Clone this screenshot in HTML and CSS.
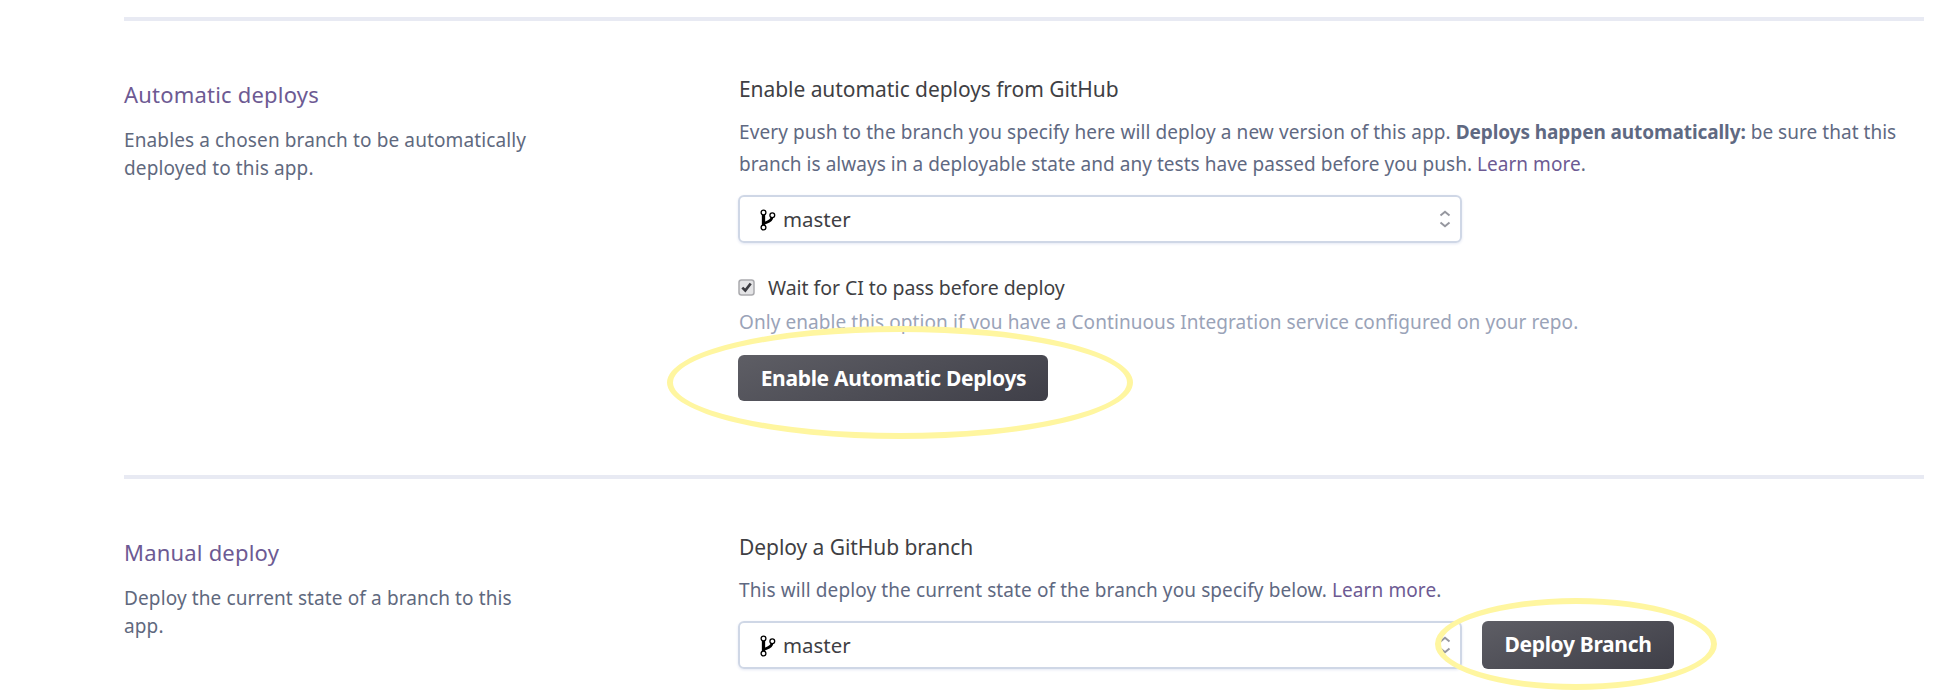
FILE: index.html
```
<!DOCTYPE html>
<html lang="en">
<head>
<meta charset="utf-8">
<title>Deploy settings</title>
<link rel="stylesheet" href="styles.css">
</head>
<body>
<svg class="defs" width="0" height="0" aria-hidden="true">
  <symbol id="branch" viewBox="0 0 16 24">
    <path d="M3.500 7v12" fill="none" stroke="#000" stroke-width="3.300"/>
    <path d="M12 10c-.2 4.600-4.500 4.800-8 6.300" fill="none" stroke="#000" stroke-width="2.800"/>
    <g fill="#fff" stroke="#000" stroke-width="1.300"><circle cx="3.500" cy="5.500" r="2.400"/><circle cx="12.300" cy="8.300" r="2.400"/><circle cx="3.500" cy="20.500" r="2.400"/></g>
  </symbol>
  <symbol id="sort" viewBox="0 0 12 18">
    <path d="M1.500 5.500 6 1.800l4.500 3.700M1.500 12.500 6 16.200l4.500-3.700" fill="none" stroke="#96979f" stroke-width="2"/>
  </symbol>
</svg>
<main class="page">
  <section class="section">
    <div class="intro">
      <h2 class="title">Automatic deploys</h2>
      <p class="desc">Enables a chosen branch to be automatically<br>deployed to this app.</p>
    </div>
    <div class="content">
      <h3 class="subtitle">Enable automatic deploys from GitHub</h3>
      <p class="text"><span class="lead">Every push to the branch you specify here will deploy a new version of this app. </span><b class="strong">Deploys happen automatically:</b> be sure that this<br>branch is always in a deployable state and any tests have passed before you push. <a class="link">Learn more</a>.</p>
      <div class="select"><svg class="branch"><use href="#branch"/></svg><span class="value">master</span><svg class="sort"><use href="#sort"/></svg></div>
      <label class="check"><svg class="box" viewBox="0 0 17 17"><rect x="1" y="1" width="15" height="15" rx="2.500" fill="#e4e4e6" stroke="#aaaaae" stroke-width="1.500"/><path d="M4.300 8.600 7.300 11.500 12.700 4.500" fill="none" stroke="#3c3c42" stroke-width="2.700"/></svg><span>Wait for CI to pass before deploy</span></label>
      <p class="hint">Only enable this option if you have a Continuous Integration service configured on your repo.</p>
      <div class="action"><button class="button enable">Enable Automatic Deploys</button><i class="ring ring-enable"></i></div>
    </div>
  </section>
  <section class="section section-manual">
    <div class="intro">
      <h2 class="title">Manual deploy</h2>
      <p class="desc">Deploy the current state of a branch to this<br>app.</p>
    </div>
    <div class="content">
      <h3 class="subtitle">Deploy a GitHub branch</h3>
      <p class="text text-manual">This will deploy the current state of the branch you specify below. <a class="link">Learn more</a>.</p>
      <div class="row"><div class="select"><svg class="branch"><use href="#branch"/></svg><span class="value">master</span><svg class="sort"><use href="#sort"/></svg></div>
      <div class="action"><button class="button deploy">Deploy Branch</button><i class="ring ring-deploy"></i></div></div>
    </div>
  </section>
</main>
</body>
</html>
```
FILE: styles.css
```
* { box-sizing: border-box; }
body { margin: 0; background: #fff; font-family: "Noto Sans", sans-serif; color: #3f3f44; }
.defs { display: block; }
.page { padding: 17px 12px 0 124px; }
.section { display: flex; height: 458px; border-top: 4px solid #e8eaf3; white-space: nowrap; }
.section-manual { height: 220px; }
.intro { width: 614px; padding-top: 57px; }
.content { flex: 1; padding-top: 52px; }
h2, h3, p { margin: 0; font-weight: 400; }
.title { font-size: 22px; line-height: 32px; letter-spacing: .2px; color: #6d5a93; }
.desc { margin-top: 16px; font-size: 19px; line-height: 28px; letter-spacing: .12px; color: #5f697e; }
.subtitle { padding-left: 1px; font-size: 21px; line-height: 32px; letter-spacing: -.06px; }
.text { margin-top: 11px; padding-left: 1px; font-size: 19px; line-height: 32px; letter-spacing: .035px; color: #5f6982; }
.lead { letter-spacing: .09px; }
.strong { letter-spacing: -.09px; }
.text-manual { letter-spacing: .1px; }
.link { color: #6d5a93; }
.select { display: flex; align-items: center; width: 724px; height: 48px; margin-top: 15px; padding: 0 9px 0 20px; border: 2px solid #cfd7e6; border-radius: 6px; box-shadow: 0 1px 3px #e4e8f4; }
.branch { width: 16px; height: 24px; }
.value { margin-left: 7px; font-size: 20.4px; line-height: 32px; }
.sort { width: 12px; height: 18px; margin-left: auto; }
.check { display: flex; align-items: center; height: 32px; margin-top: 28px; font-size: 19.5px; letter-spacing: -.06px; }
.box { width: 17px; height: 17px; margin-right: 13px; }
.hint { margin-top: 3px; padding-left: 1px; font-size: 19px; line-height: 32px; letter-spacing: .075px; color: #9aa3b8; }
.action { position: relative; display: flex; }
.button { display: block; border: 0; border-radius: 6px; padding: 0 0 3px; background: linear-gradient(160deg, #5e5e65, #3f3f48); color: #fff; font: 700 21px/38px "Noto Sans", sans-serif; letter-spacing: -.32px; }
.enable { width: 310px; height: 46px; margin-top: 17px; padding-bottom: 1px; padding-left: 1px; }
.row { display: flex; gap: 20px; }
.deploy { width: 192px; height: 48px; margin-top: 15px; }
.ring { position: absolute; border: 6px solid #fff6a0; border-radius: 50%; pointer-events: none; }
.ring-enable { left: -71px; top: -12px; width: 466px; height: 113px; }
.ring-deploy { left: -47px; top: -8px; width: 282px; height: 92px; }
```
